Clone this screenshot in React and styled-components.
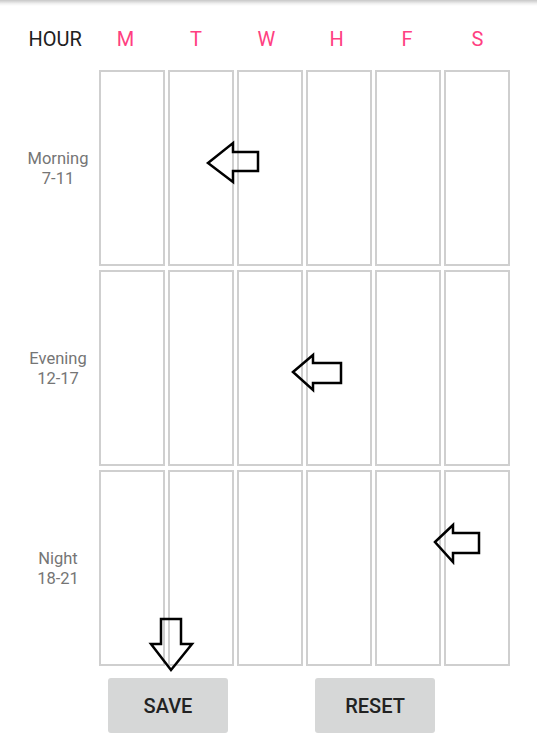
import React from 'react';
import styled, { createGlobalStyle } from 'styled-components';

const GlobalStyle = createGlobalStyle`
    body {
        margin: 0;
        background: #fff;
        font-family: Roboto, "Noto Sans", sans-serif;
    }
`;

const Page = styled.div`
    position: relative;
    width: 537px;
    height: 755px;
    overflow: hidden;
    background: #fff;
`;

const TopShadow = styled.div`
    height: 6px;
    background: linear-gradient(rgba(0,0,0,0.22), rgba(0,0,0,0.06) 60%, rgba(0,0,0,0));
`;

const Header = styled.div`
    display: grid;
    grid-template-columns: repeat(7, 70.4px);
    margin: 16px 0 0 20px;
    height: 34px;
    align-items: center;
`;

const HeadCell = styled.div`
    text-align: center;
    font-size: 20px;
    color: ${p => p.accent ? '#ff4081' : '#212121'};
`;

const Schedule = styled.div`
    display: grid;
    grid-template-columns: 76px repeat(6, 66px);
    grid-auto-rows: 196px;
    column-gap: 3px;
    row-gap: 4px;
    margin: 14px 0 0 20px;
`;

const Label = styled.div`
    display: flex;
    flex-direction: column;
    justify-content: center;
    align-items: center;
    font-size: 16.5px;
    line-height: 20px;
    padding-top: 2px;
    color: #757575;
    text-align: center;
`;

const Cell = styled.div`
    box-sizing: border-box;
    border: 2px solid #cfcfcf;
`;

const Buttons = styled.div`
    display: flex;
    gap: 87px;
    margin: 12px 0 0 108px;
`;

const Button = styled.button`
    width: 120px;
    height: 55px;
    border: none;
    border-radius: 3px;
    background: #d6d7d7;
    color: #222;
    font-family: Roboto, sans-serif;
    font-weight: 500;
    font-size: 20px;
    padding: 0;
`;

const ArrowBox = styled.svg`
    position: absolute;
    left: ${p => p.x}px;
    top: ${p => p.y}px;
    overflow: visible;
`;

const Arrow = ({ x, y, w, h, points }) => (
    <ArrowBox x={x} y={y} width={w} height={h} viewBox={`0 0 ${w} ${h}`}>
        <polygon points={points} fill="none" stroke="#000" strokeWidth="2.5" strokeLinejoin="miter" />
    </ArrowBox>
);

const days = ['M', 'T', 'W', 'H', 'F', 'S'];
const slots = [
    { name: 'Morning', hours: '7-11' },
    { name: 'Evening', hours: '12-17' },
    { name: 'Night', hours: '18-21' },
];

const App = () => {
    return (
        <>
            <GlobalStyle />
            <Page>
                <TopShadow />
                <Header>
                    <HeadCell>HOUR</HeadCell>
                    {days.map(d => <HeadCell accent key={d}>{d}</HeadCell>)}
                </Header>
                <Schedule>
                    {slots.map(s => (
                        <React.Fragment key={s.name}>
                            <Label>{s.name}<br />{s.hours}</Label>
                            {days.map(d => <Cell key={`${s.name}${d}`} />)}
                        </React.Fragment>
                    ))}
                </Schedule>
                <Buttons>
                    <Button>SAVE</Button>
                    <Button>RESET</Button>
                </Buttons>

                {/* tutorial hint arrows */}
                <Arrow x={207} y={142} w={53} h={42} points="1,21 26,1 26,10 51,10 51,29 26,29 26,40" />
                <Arrow x={292} y={354} w={51} h={38} points="1,18 21,1 21,9 49,9 49,29 21,29 21,36" />
                <Arrow x={434} y={524} w={47} h={40} points="1,18 19,1 19,9 45,9 45,29 19,29 19,38" />
                <Arrow x={150} y={618} w={44} h={54} points="11,1 31,1 31,26 42,26 21,52 1,26 11,26" />
            </Page>
        </>
    );
};

export default App;
